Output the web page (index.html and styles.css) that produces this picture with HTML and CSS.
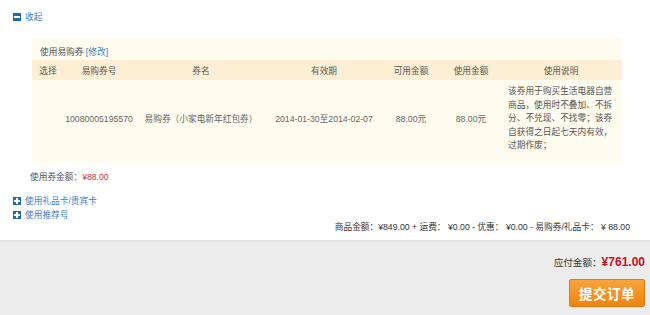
FILE: index.html
```html
<!DOCTYPE html>
<html lang="zh-CN">
<head>
<meta charset="utf-8">
<title>订单</title>
<link rel="stylesheet" href="styles.css">
</head>
<body>
<div class="main">
  <div class="toggle"><span class="ico ico-minus"></span><a class="link">收起</a></div>
  <div class="coupon-box">
    <div class="box-title">使用易购券 <a class="link">[修改]</a></div>
    <table class="coupon-table">
      <colgroup>
        <col class="c1"><col class="c2"><col class="c3"><col class="c4"><col class="c5"><col class="c6"><col class="c7">
      </colgroup>
      <thead>
        <tr><th>选择</th><th>易购券号</th><th>券名</th><th>有效期</th><th>可用金额</th><th>使用金额</th><th>使用说明</th></tr>
      </thead>
      <tbody>
        <tr>
          <td></td>
          <td>10080005195570</td>
          <td>易购券（小家电新年红包券）</td>
          <td>2014-01-30至2014-02-07</td>
          <td>88.00元</td>
          <td>88.00元</td>
          <td class="desc">该券用于购买生活电器自营商品，使用时不叠加、不拆分、不兑现、不找零；该券自获得之日起七天内有效，过期作废；</td>
        </tr>
      </tbody>
    </table>
  </div>
  <div class="coupon-total">使用券金额：<span class="red">¥88.00</span></div>
  <div class="opts">
    <div class="opt"><span class="ico ico-plus"></span><a class="link">使用礼品卡/贵宾卡</a></div>
    <div class="opt"><span class="ico ico-plus"></span><a class="link">使用推荐号</a></div>
  </div>
  <div class="summary">商品金额：¥849.00 + 运费： ¥0.00 - 优惠： ¥0.00 - 易购券/礼品卡： ¥ 88.00</div>
</div>
<div class="footer">
  <div class="pay">应付金额：<strong>¥761.00</strong></div>
  <button class="submit" type="button">提交订单</button>
</div>
</body>
</html>
```
FILE: styles.css
```css
html, body {
  margin: 0;
  padding: 0;
  background: #fff;
  font-family: "Liberation Sans", "Noto Sans CJK SC", sans-serif;
  font-size: 8.7px;
  color: #555;
  overflow: hidden;
}
.main {
  padding: 10px 20px 0 13px;
}
.link {
  color: #3b7dbf;
  text-decoration: none;
}
.toggle, .opt {
  display: flex;
  align-items: center;
  height: 14px;
  line-height: 14px;
}
.ico {
  position: relative;
  width: 8px;
  height: 8px;
  background: #1f6aa8;
  margin-right: 4px;
  flex: none;
}
.ico::before {
  content: "";
  position: absolute;
  left: 1px;
  top: 3px;
  width: 6px;
  height: 2px;
  background: #fff;
}
.ico-plus::after {
  content: "";
  position: absolute;
  left: 3px;
  top: 1px;
  width: 2px;
  height: 6px;
  background: #fff;
}
.coupon-box {
  margin: 13px 0 0 19px;
  width: 590px;
  background: #fffbee;
  padding-top: 8px;
}
.box-title {
  line-height: 14px;
  height: 14px;
  padding-left: 8px;
  margin-bottom: 1px;
  color: #555;
}
.coupon-table {
  width: 590px;
  border-collapse: collapse;
  table-layout: fixed;
}
.c1 { width: 32px; }
.c2 { width: 70px; }
.c3 { width: 134px; }
.c4 { width: 112px; }
.c5 { width: 62px; }
.c6 { width: 58px; }
.c7 { width: 122px; }
.coupon-table th {
  background: #fdefd3;
  height: 20px;
  padding: 0;
  font-weight: normal;
  color: #555;
  text-align: center;
}
.coupon-table td {
  padding: 5px 0 10px;
  text-align: center;
  vertical-align: middle;
  color: #666;
  white-space: nowrap;
}
.coupon-table td.desc {
  white-space: normal;
  text-align: left;
  line-height: 13.5px;
  padding-left: 8px;
  padding-right: 8px;
  color: #555;
}
.coupon-total {
  margin: 7px 0 0 17px;
  line-height: 14px;
  color: #555;
}
.red {
  color: #c8343a;
}
.opts {
  margin-top: 10px;
}
.summary {
  text-align: right;
  line-height: 10px;
  color: #333;
}
.footer {
  margin-top: 8px;
  border-top: 2px solid #e3e3e3;
  background: #ececec;
  height: 61px;
  padding: 12px 5px 0 0;
  display: flex;
  flex-direction: column;
  align-items: flex-end;
}
.pay {
  line-height: 16px;
  font-size: 9.6px;
  color: #333;
}
.pay strong {
  color: #c80f23;
  font-size: 12px;
  font-weight: bold;
}
.submit {
  margin-top: 8px;
  width: 76px;
  height: 28px;
  border: 1px solid #e07a0c;
  border-radius: 2px;
  background: linear-gradient(#f8a43c, #ef8411);
  color: #fff;
  font-family: "Noto Sans CJK SC", sans-serif;
  font-size: 13.5px;
  font-weight: bold;
  padding: 0;
  letter-spacing: 0.5px;
}
```
